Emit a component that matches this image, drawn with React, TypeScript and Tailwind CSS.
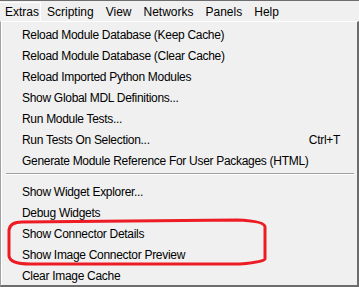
const menuBar = ["Extras", "Scripting", "View", "Networks", "Panels", "Help"];

const topItems: { label: string; shortcut?: string }[] = [
  { label: "Reload Module Database (Keep Cache)" },
  { label: "Reload Module Database (Clear Cache)" },
  { label: "Reload Imported Python Modules" },
  { label: "Show Global MDL Definitions..." },
  { label: "Run Module Tests..." },
  { label: "Run Tests On Selection...", shortcut: "Ctrl+T" },
  { label: "Generate Module Reference For User Packages (HTML)" },
];

const bottomItems = [
  "Show Widget Explorer...",
  "Debug Widgets",
  "Show Connector Details",
  "Show Image Connector Preview",
  "Clear Image Cache",
];

function MenuRow({ label, shortcut }: { label: string; shortcut?: string }) {
  return (
    <div className="flex h-[21px] items-center justify-between pl-[20px] pr-[17px]">
      <span>{label}</span>
      {shortcut && <span>{shortcut}</span>}
    </div>
  );
}

export default function App() {
  return (
    <div
      className="relative h-[287px] w-[359px] overflow-hidden bg-[#f0f0f0] text-[12px] leading-none tracking-[-0.3px] text-black"
      style={{ fontFamily: '"Liberation Sans", Arial, sans-serif' }}
    >
      {/* menu bar */}
      <div className="flex h-[21px] border-t border-[#6d6d6d] pt-[1px] tracking-normal">
        {menuBar.map((name, i) => (
          <div
            key={name}
            className={
              i === 0
                ? "flex h-[19px] items-center border-r border-t border-white pl-[5px] pr-[1px]"
                : "flex h-[19px] items-center px-[6px]"
            }
          >
            {name}
          </div>
        ))}
      </div>

      {/* dropdown */}
      <div className="h-[266px] border-b-2 border-l border-r-2 border-t border-b-[#6d6d6d] border-l-[#a0a0a0] border-r-[#6d6d6d] border-t-white">
        <div className="h-full border-l border-white pt-[2px]">
          {topItems.map((item) => (
            <MenuRow key={item.label} label={item.label} shortcut={item.shortcut} />
          ))}
          <div className="flex h-[10px] flex-col pl-[4px] pr-[3px] pt-[2px]">
            <div className="h-px bg-[#a0a0a0]" />
            <div className="h-px bg-white" />
          </div>
          {bottomItems.map((label) => (
            <MenuRow key={label} label={label} />
          ))}
        </div>
      </div>

      {/* red annotation */}
      <svg className="absolute left-0 top-0" width="359" height="287" viewBox="0 0 359 287">
        <path
          d="M 22 222 L 237 220 Q 265 221 265 227 L 265 259 Q 265 262 240 264 L 30 264 Q 10 264 9 256 L 9 230 Q 10 222 22 222 Z"
          fill="none"
          stroke="#ed1c24"
          strokeWidth="3"
        />
      </svg>
    </div>
  );
}
